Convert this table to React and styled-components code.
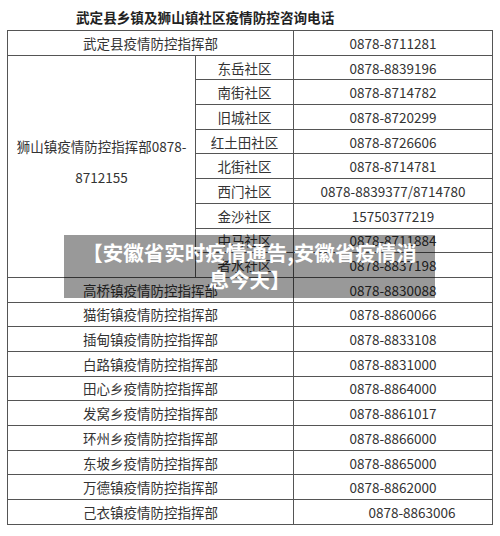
import React from 'react';
import styled, { createGlobalStyle } from 'styled-components';

const GlobalStyle = createGlobalStyle`
    html, body {
        margin: 0;
        padding: 0;
        background: #fff;
    }
    body {
        font-family: "Noto Sans CJK SC", "Liberation Sans", sans-serif;
    }
`

const Page = styled.div`
    position: relative;
    width: 500px;
    height: 536px;
    padding: 0 8px 0 7px;
    box-sizing: border-box;
`

const Title = styled.h3`
    margin: 0;
    height: 30px;
    padding-left: 69px;
    font-size: 13.6px;
    font-weight: 700;
    line-height: 34px;
    color: #222;
`

const Table = styled.table`
    width: 485px;
    border-collapse: collapse;
    table-layout: fixed;
    color: #333;
    font-size: 13.5px;
`

const Row = styled.tr`
    height: 24.7px;
`

const Cell = styled.td`
    border: 1px solid #555;
    padding: 0 0 ${(props) => props.$tall ? '8px' : '0'} ${(props) => props.$shift || 0}px;
    text-align: center;
    vertical-align: middle;
    line-height: ${(props) => props.$tall ? '31px' : '18px'};
    white-space: nowrap;
`

const Banner = styled.div`
    position: absolute;
    left: 64px;
    top: 235px;
    width: 371px;
    height: 63px;
    padding: 4px 10px 0;
    box-sizing: border-box;
    background: rgba(0, 0, 0, 0.4);
    color: #fff;
    font-size: 20.5px;
    font-weight: 700;
    line-height: 27px;
    text-align: center;
`

const communities = [
    ['东岳社区', '0878-8839196'],
    ['南街社区', '0878-8714782'],
    ['旧城社区', '0878-8720299'],
    ['红土田社区', '0878-8726606'],
    ['北街社区', '0878-8714781'],
    ['西门社区', '0878-8839377/8714780'],
    ['金沙社区', '15750377219'],
    ['中马社区', '0878-8711884'],
    ['者水社区', '0878-8837198'],
]

const towns = [
    ['高桥镇疫情防控指挥部', '0878-8830088'],
    ['猫街镇疫情防控指挥部', '0878-8860066'],
    ['插甸镇疫情防控指挥部', '0878-8833108'],
    ['白路镇疫情防控指挥部', '0878-8831000'],
    ['田心乡疫情防控指挥部', '0878-8864000'],
    ['发窝乡疫情防控指挥部', '0878-8861017'],
    ['环州乡疫情防控指挥部', '0878-8866000'],
    ['东坡乡疫情防控指挥部', '0878-8865000'],
    ['万德镇疫情防控指挥部', '0878-8862000'],
    ['己衣镇疫情防控指挥部', '0878-8863006', 38],
]

const App = () => {
    return (
        <Page>
            <GlobalStyle />
            <Title>武定县乡镇及狮山镇社区疫情防控咨询电话</Title>
            <Table>
                <colgroup>
                    <col style={{ width: 188 }} />
                    <col style={{ width: 98 }} />
                    <col style={{ width: 199 }} />
                </colgroup>
                <tbody>
                    <Row>
                        <Cell colSpan={2}>武定县疫情防控指挥部</Cell>
                        <Cell>0878-8711281</Cell>
                    </Row>
                    {communities.map(([name, phone], i) => (
                        <Row key={name}>
                            {i === 0 &&
                                <Cell rowSpan={communities.length} $tall>
                                    狮山镇疫情防控指挥部0878-<br />8712155
                                </Cell>
                            }
                            <Cell>{name}</Cell>
                            <Cell>{phone}</Cell>
                        </Row>
                    ))}
                    {towns.map(([name, phone, shift]) => (
                        <Row key={name}>
                            <Cell colSpan={2}>{name}</Cell>
                            <Cell $shift={shift}>{phone}</Cell>
                        </Row>
                    ))}
                </tbody>
            </Table>
            <Banner>【安徽省实时疫情通告,安徽省疫情消息今天】</Banner>
        </Page>
    )
}

export default App
